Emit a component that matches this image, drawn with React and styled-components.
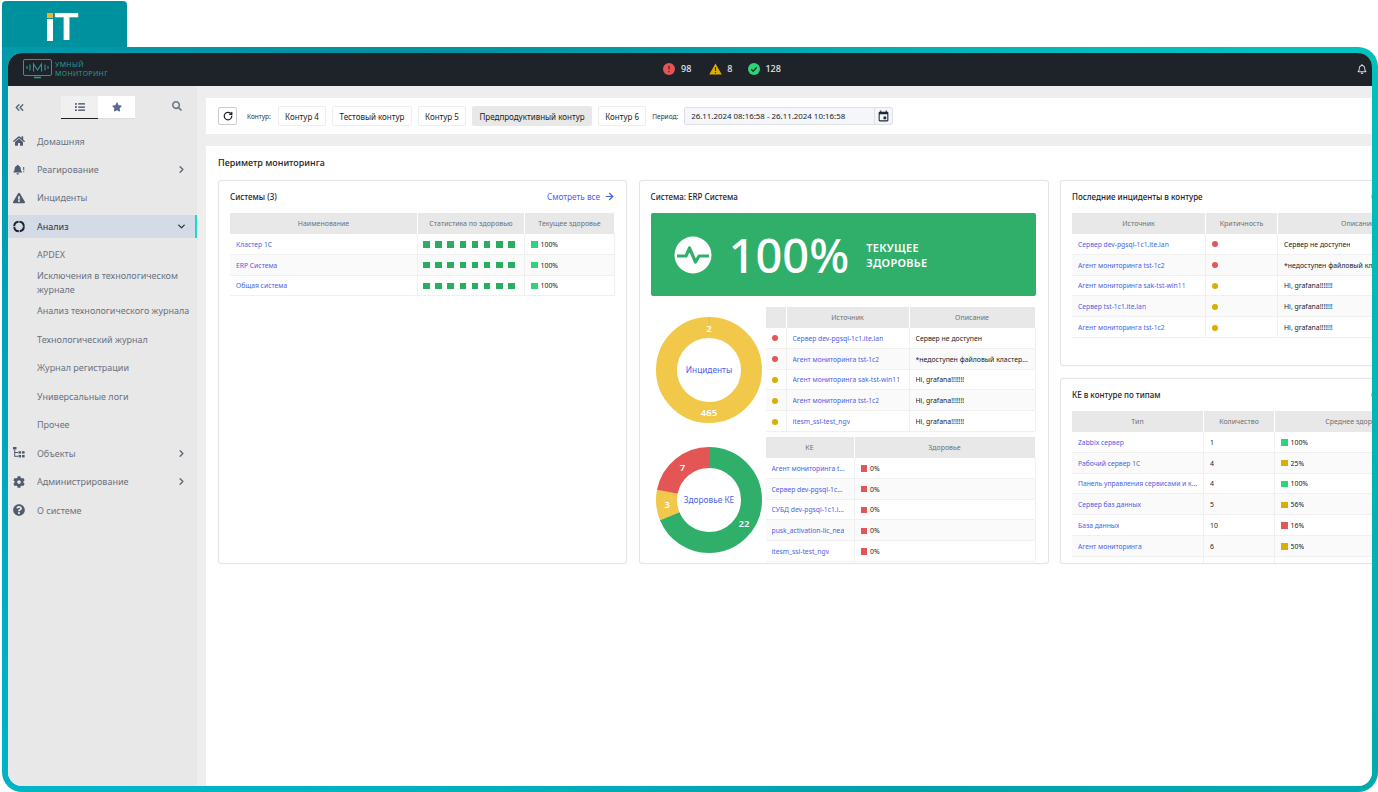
import React from 'react';
import styled, { createGlobalStyle } from 'styled-components';
import { FaHome, FaExclamationTriangle, FaCog, FaQuestionCircle, FaStar, FaSearch, FaListUl, FaRegBell } from 'react-icons/fa';
import { LuChevronRight, LuChevronDown, LuChevronsLeft, LuRotateCw, LuArrowRight } from 'react-icons/lu';
import { MdEvent } from 'react-icons/md';

const GlobalStyle = createGlobalStyle`
  html, body {
    margin: 0;
    padding: 0;
    width: 1378px;
    height: 792px;
    overflow: hidden;
    background: #fff;
    font-family: "Noto Sans", "Open Sans", sans-serif;
  }
  * { box-sizing: border-box; }
`;

const RED = '#e45656';
const YELLOW = '#d9ae00';
const GREEN = '#2ed47a';
const DONUT_GREEN = '#30af6a';
const DONUT_YELLOW = '#f2c84b';
const LINK = '#4a62e6';

// Рамка страницы
const Page = styled.div`
  width: 1378px;
  height: 792px;
  padding: 1px 0 0 2px;
  display: flex;
  flex-direction: column;
`;

const Tab = styled.div`
  width: 125px;
  height: 46px;
  flex: none;
  background: #00919f;
  border-radius: 4px 4px 0 0;
  display: flex;
  justify-content: center;
  padding: 12px 4px 0 0;
  gap: 2px;
`;

const LogoI = styled.span`
  width: 6px;
  height: 28px;
  background: linear-gradient(#f5b21e 0 5px, #00919f 5px 6px, #fff 6px);
`;

const LogoT = styled.span`
  font-family: "Liberation Sans", sans-serif;
  font-weight: 700;
  font-size: 39px;
  line-height: 28px;
  height: 28px;
  color: #fff;
`;

const Frame = styled.div`
  flex: 1;
  min-height: 0;
  padding: 6px;
  border-radius: 0 20px 20px 20px;
  background: conic-gradient(#00a0a6 0deg, #00c2bd 60deg, #00aeb0 110deg, #00a0a8 150deg, #00aebb 200deg, #00b4c8 240deg, #00a2b4 280deg, #00919f 320deg, #00a0a6 360deg);
`;

const Screen = styled.div`
  height: 100%;
  border-radius: 14px;
  overflow: hidden;
  display: flex;
  flex-direction: column;
  background: #eeeeee;
`;

// Шапка
const TopBar = styled.header`
  height: 33px;
  flex: none;
  background: #1e2229;
  display: flex;
  align-items: center;
  padding: 0 5px 2px 15px;
`;

const Brand = styled.div`
  display: flex;
  align-items: center;
  gap: 3px;
  width: 640px;
`;

const BrandText = styled.div`
  color: #2b9c94;
  font-size: 7px;
  line-height: 9px;
  text-transform: uppercase;
  letter-spacing: 0.35px;
`;

const Statuses = styled.div`
  display: flex;
  align-items: center;
  color: #e4e8ee;
  font-size: 9px;
  font-weight: 500;
`;

const Status = styled.div`
  display: flex;
  align-items: center;
  gap: ${p => p.$gap}px;
  margin-right: ${p => p.$after}px;
`;

const TopBell = styled.div`
  margin-left: auto;
  color: #d5dae2;
  display: flex;
  font-size: 10px;
`;

const Body = styled.div`
  flex: 1;
  min-height: 0;
  display: flex;
`;

// Боковое меню
const Sidebar = styled.aside`
  width: 189px;
  flex: none;
  background: #e8e8e8;
`;

const SideTop = styled.div`
  height: 43.5px;
  display: flex;
  align-items: flex-start;
  padding-top: 10px;
`;

const Collapse = styled.div`
  width: 53px;
  padding: 5px 0 0 5px;
  display: flex;
  font-size: 13px;
  color: #5c6678;
`;

const ViewTab = styled.div`
  width: 37px;
  height: 23px;
  display: flex;
  align-items: center;
  justify-content: center;
  font-size: 10px;
  background: ${p => (p.$active ? '#f0f0f0' : '#fff')};
  color: ${p => (p.$active ? '#3b4557' : '#5b6a8f')};
  border-bottom: 1px solid ${p => (p.$active ? '#222' : '#ddd')};
`;

const SearchBtn = styled.div`
  margin-left: 37px;
  padding-top: 5px;
  font-size: 10px;
  color: #6c7584;
  display: flex;
`;

const MenuRow = styled.div`
  height: 23px;
  margin-bottom: 5.4px;
  display: flex;
  align-items: center;
  padding: 0 8px 0 5px;
  font-size: 9px;
  color: ${p => (p.$active ? '#2b3342' : '#6a7280')};
  background: ${p => (p.$active ? '#d5dbe6' : 'transparent')};
  border-right: 2px solid ${p => (p.$active ? '#1fd8c8' : 'transparent')};
`;

const MenuIcon = styled.span`
  width: 12px;
  margin-right: 12px;
  display: flex;
  justify-content: center;
  font-size: 12px;
  color: ${p => (p.$active ? '#1e2229' : '#4f5b6e')};
`;

const Chevron = styled.span`
  margin-left: auto;
  display: flex;
  font-size: 11px;
  color: ${p => (p.$active ? '#2b3342' : '#5c6678')};
`;

const SubRow = styled.div`
  height: 23px;
  margin-bottom: 5.4px;
  display: flex;
  align-items: center;
  padding: 0 6px 0 29px;
  font-size: 9px;
  line-height: 14px;
  color: #6a7280;
  white-space: ${p => (p.$wrap ? 'normal' : 'nowrap')};
`;

// Основная часть
const Main = styled.main`
  flex: 1;
  min-width: 0;
  padding: 12px 0 0 9px;
  display: flex;
  flex-direction: column;
  gap: 12px;
`;

const Toolbar = styled.div`
  height: 36px;
  flex: none;
  background: #fff;
  display: flex;
  align-items: center;
  padding-left: 12px;
`;

const RefreshBtn = styled.div`
  width: 19px;
  height: 18px;
  border: 1px solid #c9ccd2;
  border-radius: 2px;
  display: flex;
  align-items: center;
  justify-content: center;
  font-size: 10px;
  color: #222;
  margin-right: 10px;
`;

const FieldLabel = styled.span`
  font-size: 6.5px;
  color: #333;
  margin-right: ${p => p.$after}px;
`;

const ContourBtn = styled.div`
  height: 20px;
  padding: 0 6.3px;
  margin-right: 6px;
  display: flex;
  align-items: center;
  font-size: 8px;
  color: #222;
  border-radius: 2px;
  border: 1px solid ${p => (p.$active ? '#e8e8e8' : '#eceef0')};
  background: ${p => (p.$active ? '#e8e8e8' : '#fff')};
`;

const PeriodInput = styled.div`
  width: 209px;
  height: 18px;
  display: flex;
  align-items: center;
  background: #f5f6fa;
  border: 1px solid #dfe1e6;
  border-radius: 2px;
  font-size: 7.9px;
  color: #222;
`;

const PeriodValue = styled.span`
  width: 190px;
  padding-left: 6px;
  border-right: 1px solid #dfe1e6;
  height: 100%;
  display: flex;
  align-items: center;
`;

const PeriodIcon = styled.span`
  flex: 1;
  display: flex;
  justify-content: center;
  font-size: 13px;
  color: #1e2a3c;
`;

const Content = styled.section`
  flex: 1;
  min-height: 0;
  background: #fff;
  padding: 10px 0 0 12px;
  overflow: hidden;
`;

const PageTitle = styled.h2`
  margin: 0 0 11px;
  font-size: 9px;
  line-height: 13px;
  font-weight: 500;
  color: #222;
`;

const Columns = styled.div`
  display: grid;
  grid-template-columns: 409px 410px 391px;
  column-gap: 11.5px;
  height: 384px;
`;

const Card = styled.div`
  background: #fff;
  border: 1px solid #e4e4e4;
  border-radius: 3px;
  box-shadow: 0 0 1px rgba(0, 0, 0, 0.08);
  padding: 10px 11px 0;
  overflow: hidden;
  min-height: 0;
`;

const Stack = styled.div`
  display: grid;
  grid-template-rows: 186px 186px;
  row-gap: 12px;
  min-height: 0;
`;

const CardHead = styled.div`
  height: 10px;
  margin-bottom: 12px;
  display: flex;
  align-items: center;
  justify-content: space-between;
`;

const CardTitle = styled.h3`
  margin: 0;
  font-size: 8px;
  font-weight: 500;
  color: #1e2229;
`;

const SeeAll = styled.a`
  display: flex;
  align-items: center;
  gap: 4px;
  font-size: 8.2px;
  color: ${LINK};
`;

// Таблицы
const HeadRow = styled.div`
  display: grid;
  grid-template-columns: ${p => p.$cols};
  height: 21px;
  column-gap: 1px;
`;

const HeadCell = styled.div`
  background: #e8e8e8;
  display: flex;
  align-items: center;
  justify-content: center;
  font-size: 7px;
  color: #6d7178;
`;

const Row = styled.div`
  display: grid;
  grid-template-columns: ${p => p.$cols};
  height: 20.8px;
  column-gap: 1px;
  background: ${p => (p.$odd ? '#fafafa' : '#fff')};
  border-bottom: 1px solid #f0f0f0;
`;

const Cell = styled.div`
  display: flex;
  align-items: center;
  min-width: 0;
  padding: 1px 0 0 6px;
  font-size: 6.9px;
  color: #222;
  white-space: nowrap;
  overflow: hidden;
  box-shadow: 1px 0 0 #f0f0f0;
`;

const CellLink = styled.a`
  font-size: 6.75px;
  color: ${LINK};
  overflow: hidden;
  text-overflow: ellipsis;
`;

const CellText = styled.span`
  overflow: hidden;
  text-overflow: ellipsis;
`;

const Dot = styled.span`
  width: 6px;
  height: 6px;
  border-radius: 50%;
  background: ${p => p.$color};
`;

const Swatch = styled.span`
  width: 6.5px;
  height: 6.5px;
  margin-right: 3px;
  flex: none;
  background: ${p => p.$color};
`;

const Squares = styled.div`
  display: flex;
  gap: 5.7px;
  margin-left: -1px;
`;

const Square = styled.span`
  width: 6.5px;
  height: 6.5px;
  background: #27ae60;
`;

// Карточка системы
const Banner = styled.div`
  height: 83px;
  margin: 0 1px 11px 0;
  background: ${DONUT_GREEN};
  border-radius: 2px;
  display: flex;
  align-items: center;
  padding-left: 23px;
  color: #fff;
`;

const BannerValue = styled.div`
  font-size: 47px;
  font-weight: 500;
  line-height: 50px;
  margin: 0 17px 0 17px;
`;

const BannerLabel = styled.div`
  font-size: 11px;
  line-height: 15px;
  font-weight: 600;
  letter-spacing: 0.3px;
`;

const SystemGrid = styled.div`
  display: grid;
  grid-template-columns: 115px 269px;
  row-gap: 5px;
`;

const DonutBox = styled.div`
  display: flex;
  align-items: center;
  justify-content: center;
  height: 125px;
  padding: ${p => p.$nudge}px 0 0 1px;
`;

const DonutCenter = styled.text`
  font-size: 8.3px;
  fill: ${LINK};
  font-family: "Noto Sans", sans-serif;
`;

const DonutNum = styled.text`
  font-size: 9.5px;
  fill: #fff;
  font-weight: 600;
  font-family: "Noto Sans", sans-serif;
`;

const Donut = ({ segments, center, offset = 0 }) => {
  const r = 42.5;
  const len = 2 * Math.PI * r;
  const total = segments.reduce((s, x) => s + x.value, 0);
  let acc = offset;
  const parts = segments.map(s => {
    const from = acc;
    acc += s.value;
    const mid = ((from + s.value / 2) / total) * 2 * Math.PI;
    return { ...s, from, lx: 55 + 42 * Math.sin(mid), ly: 55 - 42 * Math.cos(mid) };
  });
  return (
    <svg width="110" height="110" viewBox="0 0 110 110">
      {parts.map((p, i) => (
        <circle
          key={i}
          cx="55"
          cy="55"
          r={r}
          fill="none"
          stroke={p.color}
          strokeWidth="21"
          strokeDasharray={`${(p.value / total) * len} ${len}`}
          transform={`rotate(${(p.from / total) * 360 - 90} 55 55)`}
        />
      ))}
      {parts.map((p, i) => (
        <DonutNum key={i} x={p.lx} y={p.ly + 3.5} textAnchor="middle">{p.value}</DonutNum>
      ))}
      <DonutCenter x="55" y="58" textAnchor="middle">{center}</DonutCenter>
    </svg>
  );
};

const Table = ({ cols, heads, rows }) => (
  <div>
    <HeadRow $cols={cols}>
      {heads.map((h, i) => <HeadCell key={i}>{h}</HeadCell>)}
    </HeadRow>
    {rows.map((r, i) => (
      <Row key={i} $cols={cols} $odd={i % 2 === 1}>
        {r.map((c, j) => <Cell key={j}>{c}</Cell>)}
      </Row>
    ))}
  </div>
);

const link = t => <CellLink>{t}</CellLink>;
const text = t => <CellText>{t}</CellText>;
const dot = c => <Dot $color={c} />;
const health = (c, v) => <><Swatch $color={c} /><CellText>{v}</CellText></>;
const squares = (
  <Squares>{[0, 1, 2, 3, 4, 5, 6, 7].map(i => <Square key={i} />)}</Squares>
);

const systemRows = [
  [link('Кластер 1С'), squares, health(GREEN, '100%')],
  [link('ERP Система'), squares, health(GREEN, '100%')],
  [link('Общая система'), squares, health(GREEN, '100%')],
];

const sourceRows = [
  [dot(RED), link('Сервер dev-pgsql-1c1.ite.lan'), text('Сервер не доступен')],
  [dot(RED), link('Агент мониторинга tst-1c2'), text('*недоступен файловый кластер...')],
  [dot(YELLOW), link('Агент мониторинга sak-tst-win11'), text('Hi, grafana!!!!!!!')],
  [dot(YELLOW), link('Агент мониторинга tst-1c2'), text('Hi, grafana!!!!!!!')],
  [dot(YELLOW), link('itesm_ssl-test_ngv'), text('Hi, grafana!!!!!!!')],
];

const keRows = [
  [link('Агент мониторинга t...'), health(RED, '0%')],
  [link('Сервер dev-pgsql-1c...'), health(RED, '0%')],
  [link('СУБД dev-pgsql-1c1.i...'), health(RED, '0%')],
  [link('pusk_activation-lic_nea'), health(RED, '0%')],
  [link('itesm_ssl-test_ngv'), health(RED, '0%')],
];

const lastRows = [
  [link('Сервер dev-pgsql-1c1.ite.lan'), dot(RED), text('Сервер не доступен')],
  [link('Агент мониторинга tst-1c2'), dot(RED), text('*недоступен файловый кластер...')],
  [link('Агент мониторинга sak-tst-win11'), dot(YELLOW), text('Hi, grafana!!!!!!!')],
  [link('Сервер tst-1c1.ite.lan'), dot(YELLOW), text('Hi, grafana!!!!!!!')],
  [link('Агент мониторинга tst-1c2'), dot(YELLOW), text('Hi, grafana!!!!!!!')],
];

const typeRows = [
  [link('Zabbix сервер'), text('1'), health(GREEN, '100%')],
  [link('Рабочий сервер 1С'), text('4'), health(YELLOW, '25%')],
  [link('Панель управления сервисами и к...'), text('4'), health(GREEN, '100%')],
  [link('Сервер баз данных'), text('5'), health(YELLOW, '56%')],
  [link('База данных'), text('10'), health(RED, '16%')],
  [link('Агент мониторинга'), text('6'), health(YELLOW, '50%')],
  ['', '', ''],
];

const incidentsDonut = [
  { value: 2, color: '#b8805a' },
  { value: 465, color: DONUT_YELLOW },
];

const healthDonut = [
  { value: 22, color: DONUT_GREEN },
  { value: 3, color: DONUT_YELLOW },
  { value: 7, color: RED },
];

// Иконки, которых нет в пакетах
const LogoMark = () => (
  <svg width="29" height="20" viewBox="0 0 29 20" fill="none" stroke="#2b9c94">
    <rect x="0.5" y="0.5" width="28" height="16" rx="1.5" />
    <path d="M11 18.5h7" strokeWidth="1.5" />
    <path d="M4 7v3M7 5.5v6M10.5 12.5V5l4 6 4-6v7.5M22 5.5v6M25 7v3" strokeWidth="1.1" />
  </svg>
);

const ErrorIcon = () => (
  <svg width="12" height="12" viewBox="0 0 12 12">
    <circle cx="6" cy="6" r="6" fill={RED} />
    <path d="M6 2.8v3.8M6 8v1.2" stroke="#5a1a1f" strokeWidth="1.2" />
  </svg>
);

const WarnIcon = () => (
  <svg width="13" height="12" viewBox="0 0 13 12">
    <path d="M6.5 0.5L12.8 11.5H0.2z" fill={YELLOW} />
    <path d="M6.5 4v4M6.5 9v1.3" stroke="#3d3200" strokeWidth="1.2" />
  </svg>
);

const OkIcon = () => (
  <svg width="12" height="12" viewBox="0 0 12 12">
    <circle cx="6" cy="6" r="6" fill={GREEN} />
    <path d="M3.2 6.2l2 2 3.6-4" stroke="#123b2a" strokeWidth="1.3" fill="none" />
  </svg>
);

const ReactIcon = () => (
  <svg width="14" height="13" viewBox="0 0 14 12" fill="#4f5b6e">
    <path d="M5.5 0.5a1 1 0 0 1 1 1c1.8.5 2.6 2 2.6 3.7 0 1.7.5 2.7 1.4 3.6v.8H0.5v-.8c.9-.9 1.4-1.9 1.4-3.6 0-1.7.8-3.2 2.6-3.7a1 1 0 0 1 1-1zM4 10.5h3a1.5 1.5 0 0 1-3 0z" />
    <path d="M12.5 3v4M12.5 8v1.2" stroke="#4f5b6e" strokeWidth="1.2" />
  </svg>
);

const RingIcon = () => (
  <svg width="13" height="13" viewBox="0 0 12 12" fill="none" stroke="#1e2229" strokeWidth="2">
    <circle cx="6" cy="6" r="4.8" strokeDasharray="6.6 0.9" />
  </svg>
);

const TreeIcon = () => (
  <svg width="12" height="12" viewBox="0 0 12 12" fill="#4f5b6e">
    <rect x="0" y="0" width="3.5" height="2.4" />
    <rect x="1.2" y="2.4" width="1" height="7.4" />
    <rect x="2" y="5" width="3" height="1" />
    <rect x="2" y="8.8" width="3" height="1" />
    <rect x="5.5" y="4.2" width="2.6" height="2.4" />
    <rect x="9" y="4.2" width="2.6" height="2.4" />
    <rect x="5.5" y="8" width="2.6" height="2.4" />
    <rect x="9" y="8" width="2.6" height="2.4" />
  </svg>
);

const PulseIcon = () => (
  <svg width="38" height="38" viewBox="0 0 38 38">
    <circle cx="19" cy="19" r="18.5" fill="#fff" />
    <path d="M3 20h9l3.5-8 6 14 3.5-6h10" fill="none" stroke={DONUT_GREEN} strokeWidth="3.2" strokeLinejoin="round" />
  </svg>
);

const App = () => (
  <>
    <GlobalStyle />
    <Page>
      <Tab>
        <LogoI />
        <LogoT>T</LogoT>
      </Tab>
      <Frame>
        <Screen>
          <TopBar>
            <Brand>
              <LogoMark />
              <BrandText>Умный<br />мониторинг</BrandText>
            </Brand>
            <Statuses>
              <Status $gap={6} $after={18}><ErrorIcon />98</Status>
              <Status $gap={5} $after={16}><WarnIcon />8</Status>
              <Status $gap={5} $after={0}><OkIcon />128</Status>
            </Statuses>
            <TopBell><FaRegBell /></TopBell>
          </TopBar>
          <Body>
            <Sidebar>
              <SideTop>
                <Collapse><LuChevronsLeft strokeWidth={2.6} /></Collapse>
                <ViewTab $active><FaListUl /></ViewTab>
                <ViewTab><FaStar /></ViewTab>
                <SearchBtn><FaSearch /></SearchBtn>
              </SideTop>
              <MenuRow><MenuIcon><FaHome /></MenuIcon>Домашняя</MenuRow>
              <MenuRow><MenuIcon><ReactIcon /></MenuIcon>Реагирование<Chevron><LuChevronRight strokeWidth={3} /></Chevron></MenuRow>
              <MenuRow><MenuIcon><FaExclamationTriangle /></MenuIcon>Инциденты</MenuRow>
              <MenuRow $active><MenuIcon $active><RingIcon /></MenuIcon>Анализ<Chevron $active><LuChevronDown strokeWidth={3} /></Chevron></MenuRow>
              <SubRow>APDEX</SubRow>
              <SubRow $wrap>Исключения в технологическом журнале</SubRow>
              <SubRow>Анализ технологического журнала</SubRow>
              <SubRow>Технологический журнал</SubRow>
              <SubRow>Журнал регистрации</SubRow>
              <SubRow>Универсальные логи</SubRow>
              <SubRow>Прочее</SubRow>
              <MenuRow><MenuIcon><TreeIcon /></MenuIcon>Объекты<Chevron><LuChevronRight strokeWidth={3} /></Chevron></MenuRow>
              <MenuRow><MenuIcon><FaCog /></MenuIcon>Администрирование<Chevron><LuChevronRight strokeWidth={3} /></Chevron></MenuRow>
              <MenuRow><MenuIcon><FaQuestionCircle /></MenuIcon>О системе</MenuRow>
            </Sidebar>
            <Main>
              <Toolbar>
                <RefreshBtn><LuRotateCw strokeWidth={3} /></RefreshBtn>
                <FieldLabel $after={7}>Контур:</FieldLabel>
                <ContourBtn>Контур 4</ContourBtn>
                <ContourBtn>Тестовый контур</ContourBtn>
                <ContourBtn>Контур 5</ContourBtn>
                <ContourBtn $active>Предпродуктивный контур</ContourBtn>
                <ContourBtn>Контур 6</ContourBtn>
                <FieldLabel $after={6}>Период:</FieldLabel>
                <PeriodInput>
                  <PeriodValue>26.11.2024 08:16:58 - 26.11.2024 10:16:58</PeriodValue>
                  <PeriodIcon><MdEvent /></PeriodIcon>
                </PeriodInput>
              </Toolbar>
              <Content>
                <PageTitle>Периметр мониторинга</PageTitle>
                <Columns>
                  <Card>
                    <CardHead>
                      <CardTitle>Системы (3)</CardTitle>
                      <SeeAll>Смотреть все <LuArrowRight size={11} strokeWidth={2.6} /></SeeAll>
                    </CardHead>
                    <Table
                      cols="187px 106px 89px"
                      heads={['Наименование', 'Статистика по здоровью', 'Текущее здоровье']}
                      rows={systemRows}
                    />
                  </Card>
                  <Card>
                    <CardHead>
                      <CardTitle>Система: ERP Система</CardTitle>
                    </CardHead>
                    <Banner>
                      <PulseIcon />
                      <BannerValue>100%</BannerValue>
                      <BannerLabel>ТЕКУЩЕЕ<br />ЗДОРОВЬЕ</BannerLabel>
                    </Banner>
                    <SystemGrid>
                      <DonutBox $nudge={1}>
                        <Donut segments={incidentsDonut} center="Инциденты" offset={-1} />
                      </DonutBox>
                      <Table
                        cols="20px 122px 125px"
                        heads={['', 'Источник', 'Описание']}
                        rows={sourceRows}
                      />
                      <DonutBox $nudge={0}>
                        <Donut segments={healthDonut} center="Здоровье КЕ" />
                      </DonutBox>
                      <Table
                        cols="88px 180px"
                        heads={['КЕ', 'Здоровье']}
                        rows={keRows}
                      />
                    </SystemGrid>
                  </Card>
                  <Stack>
                    <Card>
                      <CardHead>
                        <CardTitle>Последние инциденты в контуре</CardTitle>
                        <SeeAll>Смотреть все <LuArrowRight size={11} strokeWidth={2.6} /></SeeAll>
                      </CardHead>
                      <Table
                        cols="133px 71px 160px"
                        heads={['Источник', 'Критичность', 'Описание']}
                        rows={lastRows}
                      />
                    </Card>
                    <Card>
                      <CardHead>
                        <CardTitle>КЕ в контуре по типам</CardTitle>
                        <SeeAll>Смотреть все <LuArrowRight size={11} strokeWidth={2.6} /></SeeAll>
                      </CardHead>
                      <Table
                        cols="131px 70px 163px"
                        heads={['Тип', 'Количество', 'Среднее здоровье']}
                        rows={typeRows}
                      />
                    </Card>
                  </Stack>
                </Columns>
              </Content>
            </Main>
          </Body>
        </Screen>
      </Frame>
    </Page>
  </>
);

export default App;
